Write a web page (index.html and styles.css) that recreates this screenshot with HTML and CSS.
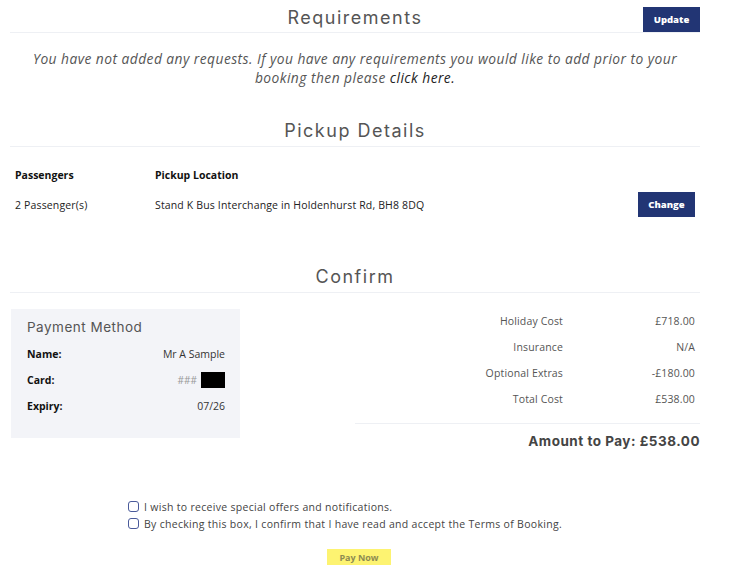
FILE: index.html
```html
<!DOCTYPE html>
<html>
<head>
<meta charset="utf-8">
<link rel="stylesheet" href="styles.css">
</head>
<body>
<div class="page">
  <section class="section">
    <div class="sec-head">
      <span></span>
      <h2 class="sec-title">Requirements</h2>
      <button class="btn-navy btn-update">Update</button>
    </div>
    <p class="req-text">You have not added any requests. If you have any requirements you would like to add prior to your booking then please <a class="link">click here.</a></p>
  </section>

  <section class="section pickup">
    <div class="sec-head">
      <span></span>
      <h2 class="sec-title">Pickup Details</h2>
      <span></span>
    </div>
    <div class="pickup-grid">
      <div class="th">Passengers</div>
      <div class="th">Pickup Location</div>
      <div></div>
      <div class="td">2 Passenger(s)</div>
      <div class="td">Stand K Bus Interchange in Holdenhurst Rd, BH8 8DQ</div>
      <div class="td right"><button class="btn-navy btn-change">Change</button></div>
    </div>
  </section>

  <section class="section confirm">
    <div class="sec-head">
      <span></span>
      <h2 class="sec-title">Confirm</h2>
      <span></span>
    </div>
    <div class="confirm-row">
      <div class="pay-box">
        <h3 class="pay-title">Payment Method</h3>
        <div class="pay-line"><span class="pay-label">Name:</span><span class="pay-val">Mr A Sample</span></div>
        <div class="pay-line"><span class="pay-label">Card:</span><span class="pay-val card"><span class="hash">###</span><span class="redact"></span></span></div>
        <div class="pay-line"><span class="pay-label">Expiry:</span><span class="pay-val">07/26</span></div>
      </div>
      <div class="costs">
        <div class="cost-table">
          <span class="c-label">Holiday Cost</span><span class="c-val">£718.00</span>
          <span class="c-label">Insurance</span><span class="c-val">N/A</span>
          <span class="c-label">Optional Extras</span><span class="c-val">-£180.00</span>
          <span class="c-label">Total Cost</span><span class="c-val">£538.00</span>
        </div>
        <div class="amount">Amount to Pay: £538.00</div>
      </div>
    </div>
  </section>

  <div class="checks">
    <label class="check"><span class="box"></span>I wish to receive special offers and notifications.</label>
    <label class="check"><span class="box"></span>By checking this box, I confirm that I have read and accept the Terms of Booking.</label>
  </div>
  <div class="pay-wrap"><button class="pay-now">Pay Now</button></div>
</div>
</body>
</html>
```

FILE: styles.css
```css
* { box-sizing: border-box; }
html, body { margin: 0; padding: 0; background: #fff; }
body { font-family: "Open Sans", "Liberation Sans", sans-serif; color: #333; }
.page { width: 690px; margin-left: 10px; padding-top: 6px; }

.sec-head {
  display: grid;
  grid-template-columns: 1fr auto 1fr;
  align-items: center;
  border-bottom: 1px solid #eef0f4;
  height: 27px;
}
.sec-title {
  margin: 0;
  font-family: "Inter", "Open Sans", sans-serif;
  font-weight: 400;
  font-size: 18px;
  letter-spacing: 1.5px;
  color: #555;
  line-height: 22px;
  position: relative;
  top: -1px;
}
.btn-navy {
  background: #223574;
  color: #fff;
  border: none;
  font-family: "Open Sans", sans-serif;
  font-weight: 800;
  font-size: 9.5px;
  padding: 0;
  cursor: pointer;
}
.btn-update { justify-self: end; width: 57px; height: 25px; }

.req-text {
  margin: 16px 0 0;
  text-align: center;
  font-style: italic;
  font-size: 13.8px;
  letter-spacing: 0.45px;
  line-height: 19px;
  color: #555;
}
.link { color: #222; }

.pickup { margin-top: 30px; }
.pickup .sec-head { height: 30px; }
.pickup-grid {
  display: grid;
  grid-template-columns: 140px 1fr 120px;
  padding: 0 5px;
  margin-top: 18px;
  align-items: center;
}
.th { font-weight: 700; font-size: 10.5px; color: #111; height: 20px; line-height: 20px; }
.td { font-size: 10.5px; letter-spacing: 0.15px; color: #222; margin-top: 7px; }
.right { display: flex; justify-content: flex-end; }
.btn-change { width: 57px; height: 25px; letter-spacing: 0; }

.confirm { margin-top: 46px; }
.confirm .sec-head { height: 30px; }
.confirm-row { display: flex; justify-content: space-between; margin-top: 16px; }
.pay-box {
  margin-left: 1px;
  width: 229px;
  height: 129px;
  background: #f3f4f8;
  padding: 9px 15px 0 16px;
}
.pay-title {
  margin: 0 0 5px;
  font-family: "Inter", "Open Sans", sans-serif;
  font-weight: 400;
  font-size: 13.5px;
  letter-spacing: 0.5px;
  color: #555;
  line-height: 18px;
}
.pay-line { display: flex; justify-content: space-between; align-items: center; height: 26px; font-size: 10.5px; }
.pay-label { font-weight: 700; color: #111; }
.pay-val { color: #333; }
.card { display: flex; align-items: center; gap: 4px; }
.hash { color: #999; font-size: 10px; }
.redact { width: 24px; height: 16px; background: #000; display: inline-block; }

.costs { width: 345px; }
.cost-table {
  display: grid;
  grid-template-columns: 208px 132px;
  border-bottom: 1px solid #eef0f4;
  padding-bottom: 10px;
}
.c-label, .c-val { text-align: right; font-size: 10.5px; letter-spacing: 0.15px; color: #555; height: 26px; line-height: 24px; }
.amount {
  text-align: right;
  font-family: "Inter", "Open Sans", sans-serif;
  font-weight: 700;
  font-size: 13.5px;
  letter-spacing: 0.5px;
  color: #444;
  margin-top: 9px;
}

.checks { margin-top: 50px; padding-left: 118px; display: flex; flex-direction: column; gap: 2px; }
.check { display: flex; align-items: center; gap: 5px; font-size: 10.5px; letter-spacing: 0.3px; color: #444; height: 15px; }
.box { width: 11px; height: 11px; border: 1.3px solid #4a5a9a; border-radius: 3px; display: inline-block; }
.pay-wrap { display: flex; justify-content: center; margin-top: 18px; margin-left: 8px; }
.pay-now {
  background: #fdf371;
  border: none;
  color: #8d8b52;
  font-family: "Open Sans", sans-serif;
  font-weight: 700;
  font-size: 9px;
  width: 64px;
  height: 16px;
  padding: 0;
}
```
